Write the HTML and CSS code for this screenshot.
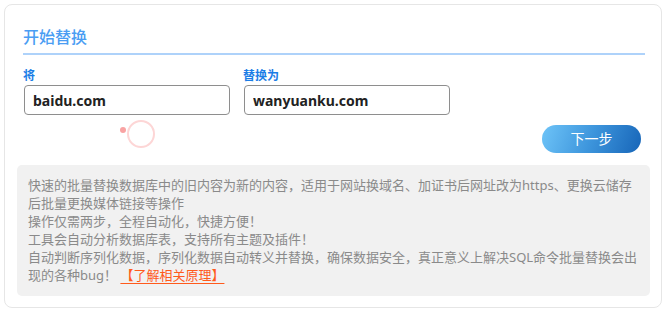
FILE: index.html
```html
<!DOCTYPE html>
<html lang="zh-CN">
<head>
<meta charset="utf-8">
<title>开始替换</title>
<link rel="stylesheet" href="styles.css">
</head>
<body>
<div class="card">
  <div class="head"><h2 class="title">开始替换</h2></div>
  <div class="fields">
    <label class="field">
      <span class="label">将</span>
      <input class="input" type="text" value="baidu.com">
    </label>
    <label class="field">
      <span class="label">替换为</span>
      <input class="input" type="text" value="wanyuanku.com">
    </label>
  </div>
  <div class="actions">
    <div class="spinner"><span class="dot"></span><span class="ring"></span></div>
    <button class="next" type="button">下一步</button>
  </div>
  <div class="info">
    <p>快速的批量替换数据库中的旧内容为新的内容，适用于网站换域名、加证书后网址改为https、更换云储存后批量更换媒体链接等操作</p>
    <p>操作仅需两步，全程自动化，快捷方便！</p>
    <p>工具会自动分析数据库表，支持所有主题及插件！</p>
    <p>自动判断序列化数据，序列化数据自动转义并替换，确保数据安全，真正意义上解决SQL命令批量替换会出现的各种bug！ <a class="link" href="#">【了解相关原理】</a></p>
  </div>
</div>
</body>
</html>
```

FILE: styles.css
```css
html, body {
  margin: 0;
  padding: 0;
  background: #ffffff;
}

body {
  font-family: "Noto Sans", "Noto Sans CJK SC", sans-serif;
}

.card {
  box-sizing: border-box;
  width: 658px;
  margin: 4px 0 0 4px;
  border: 1px solid #e6e6e6;
  border-radius: 8px;
  background: #fff;
}

.head {
  margin: 0 16px 0 18px;
  padding: 20px 0 4px;
  border-bottom: 2px solid #aed2fa;
}

.title {
  margin: 0;
  font-size: 16px;
  line-height: 24px;
  font-weight: 500;
  color: #4a9df3;
}

.fields {
  display: flex;
  gap: 14px;
  margin: 13px 0 0 19px;
}

.field {
  display: flex;
  flex-direction: column;
}

.label {
  font-size: 12px;
  line-height: 16px;
  font-weight: 700;
  color: #1a7de6;
  margin: 0 0 1px -1px;
}

.input {
  box-sizing: border-box;
  width: 206px;
  height: 30px;
  margin: 0;
  padding: 0 8px;
  border: 1px solid #8e8e8e;
  border-radius: 4px;
  font-family: "Noto Sans", "Noto Sans CJK SC", sans-serif;
  font-size: 14px;
  font-weight: 700;
  color: #222;
  background: #fff;
  outline: none;
}

.actions {
  position: relative;
  display: flex;
  justify-content: flex-end;
  margin-top: 10px;
  padding: 0 20px 0 19px;
}

.spinner {
  position: absolute;
  left: 115px;
  top: -5px;
  width: 36px;
  height: 30px;
}

.dot {
  position: absolute;
  left: 0;
  top: 7px;
  width: 6px;
  height: 6px;
  border-radius: 50%;
  background: #f9a3a3;
}

.ring {
  position: absolute;
  left: 7px;
  top: 0;
  box-sizing: border-box;
  width: 28px;
  height: 28px;
  border: 2px solid #fdd6d6;
  border-radius: 50%;
}

.next {
  width: 99px;
  height: 28px;
  margin: 0;
  padding: 0;
  border: none;
  border-radius: 14px;
  background: linear-gradient(110deg, #6ec4f8 0%, #3d95dc 50%, #1765b8 100%);
  color: #fff;
  font-family: "Noto Sans", "Noto Sans CJK SC", sans-serif;
  font-size: 14px;
  line-height: 28px;
  cursor: pointer;
}

.info {
  margin: 12px 11px 11px 12px;
  padding: 11px 12px 12px 11px;
  background: #f1f1f1;
  border-radius: 5px;
  font-size: 13px;
  line-height: 18px;
  color: #8a8a8a;
}

.info p {
  margin: 0;
}

.link {
  display: inline-block;
  line-height: 18px;
  vertical-align: top;
  color: #ff5a1c;
  text-decoration: underline;
  text-underline-offset: 3px;
}
```
